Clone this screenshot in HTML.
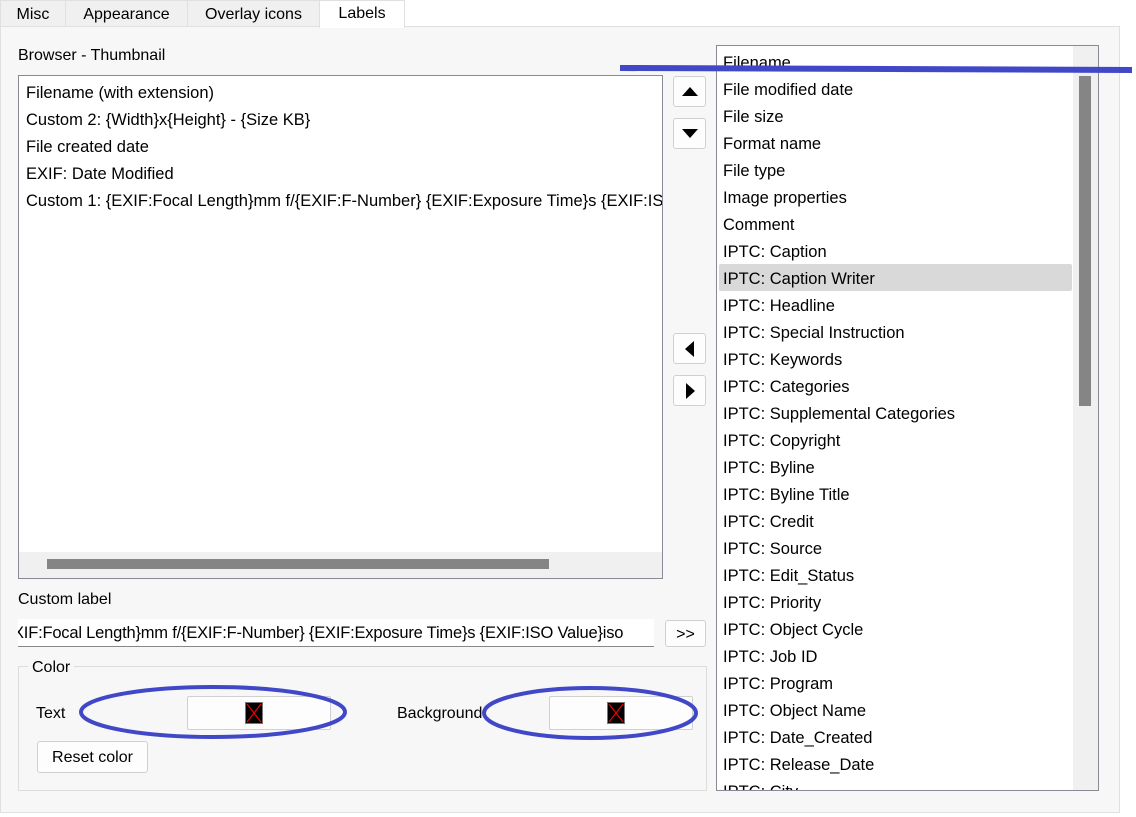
<!DOCTYPE html>
<html><head><meta charset="utf-8"><style>
*{box-sizing:border-box;margin:0;padding:0}
body{width:1136px;height:817px;background:#fff;position:relative;overflow:hidden;font-family:"Liberation Sans",sans-serif;font-size:16.5px;color:#000}
.a{position:absolute}
.tab{position:absolute;top:0;height:27px;background:#f0f0f0;border:1px solid #e0e0e0;border-bottom:none;line-height:28px;text-align:center;font-size:16px}
.panel{left:0;top:26px;width:1120px;height:787px;background:#f7f7f7;border:1px solid #e0e0e0}
.box{background:#fff;border:1px solid #8a8a94}
.btn{position:absolute;background:#fdfdfd;border:1px solid #d0d0d0;border-radius:3px}
.row{position:absolute;left:8px;height:27px;line-height:27px;white-space:nowrap}
</style></head><body>
<div class="tab" style="left:0;width:66px">Misc</div>
<div class="tab" style="left:65px;width:123px">Appearance</div>
<div class="tab" style="left:187px;width:133px">Overlay icons</div>
<div class="tab" style="left:319px;width:86px;background:#fff;height:28px;z-index:2;line-height:26px">Labels</div>
<div class="a panel"></div>

<div class="a" style="left:18px;top:47px;font-size:16px">Browser - Thumbnail</div>
<div class="a box" style="left:18px;top:75px;width:645px;height:504px;overflow:hidden">
 <div class="a" style="left:7px;top:4px;line-height:27px;white-space:nowrap">Filename (with extension)<br>Custom 2: {Width}x{Height} - {Size KB}<br>File created date<br>EXIF: Date Modified<br>Custom 1: {EXIF:Focal Length}mm f/{EXIF:F-Number} {EXIF:Exposure Time}s {EXIF:ISO Value}iso</div>
 <div class="a" style="left:0;top:476px;width:643px;height:26px;background:#f0f0f0"></div>
 <div class="a" style="left:28px;top:483px;width:502px;height:10px;background:#858585"></div>
</div>

<div class="btn" style="left:673px;top:76px;width:33px;height:31px"><svg class="a" style="left:8px;top:10px" width="16" height="9"><path d="M0 9L8 0L16 9Z"/></svg></div>
<div class="btn" style="left:673px;top:118px;width:33px;height:31px"><svg class="a" style="left:8px;top:10px" width="16" height="9"><path d="M0 0L8 9L16 0Z"/></svg></div>
<div class="btn" style="left:673px;top:333px;width:33px;height:31px"><svg class="a" style="left:11px;top:7px" width="9" height="16"><path d="M9 0L0 8L9 16Z"/></svg></div>
<div class="btn" style="left:673px;top:375px;width:33px;height:31px"><svg class="a" style="left:12px;top:7px" width="9" height="16"><path d="M0 0L9 8L0 16Z"/></svg></div>

<div class="a box" style="left:716px;top:45px;width:383px;height:746px;overflow:hidden">
 <div class="a" style="left:2px;top:218px;width:353px;height:27px;background:#d9d9d9;border-radius:2px"></div>
 <div class="a" style="left:356px;top:0;width:25px;height:744px;background:#f0f0f0"></div>
 <div class="a" style="left:362px;top:30px;width:12px;height:330px;background:#858585"></div>
 <div class="row" style="top:4px;left:6px;line-height:27px">Filename<br>File modified date<br>File size<br>Format name<br>File type<br>Image properties<br>Comment<br>IPTC: Caption<br>IPTC: Caption Writer<br>IPTC: Headline<br>IPTC: Special Instruction<br>IPTC: Keywords<br>IPTC: Categories<br>IPTC: Supplemental Categories<br>IPTC: Copyright<br>IPTC: Byline<br>IPTC: Byline Title<br>IPTC: Credit<br>IPTC: Source<br>IPTC: Edit_Status<br>IPTC: Priority<br>IPTC: Object Cycle<br>IPTC: Job ID<br>IPTC: Program<br>IPTC: Object Name<br>IPTC: Date_Created<br>IPTC: Release_Date<br>IPTC: City</div>
</div>

<div class="a" style="left:18px;top:591px;font-size:16px">Custom label</div>
<div class="a box" style="left:18px;top:619px;width:636px;height:28px;border:none;border-bottom:1px solid #888;overflow:hidden"><div class="a" style="left:-5px;top:5px;white-space:nowrap;font-size:16.5px;letter-spacing:-0.2px">XIF:Focal Length}mm f/{EXIF:F-Number} {EXIF:Exposure Time}s {EXIF:ISO Value}iso</div></div>
<div class="btn" style="left:665px;top:620px;width:41px;height:27px;text-align:center;line-height:27px;font-size:16px">&gt;&gt;</div>

<div class="a" style="left:18px;top:666px;width:689px;height:125px;border:1px solid #dcdcdc"></div>
<div class="a" style="left:28px;top:659px;background:#f7f7f7;padding:0 4px;font-size:16px">Color</div>
<div class="a" style="left:36px;top:705px;font-size:16px">Text</div>
<div class="btn" style="left:187px;top:696px;width:144px;height:34px;border-radius:2px"><div class="a" style="left:57px;top:5px;width:18px;height:22px;background:#000;border:1px solid #777"><svg width="16" height="20"><path d="M1 1L15 19M15 1L1 19" stroke="#e00" stroke-width="1.2"/></svg></div></div>
<div class="a" style="left:397px;top:705px;font-size:16px">Background</div>
<div class="btn" style="left:549px;top:696px;width:144px;height:34px;border-radius:2px"><div class="a" style="left:57px;top:5px;width:18px;height:22px;background:#000;border:1px solid #777"><svg width="16" height="20"><path d="M1 1L15 19M15 1L1 19" stroke="#e00" stroke-width="1.2"/></svg></div></div>
<div class="btn" style="left:37px;top:741px;width:111px;height:32px;text-align:center;line-height:32px;font-size:16px">Reset color</div>

<svg class="a" style="left:0;top:0" width="1136" height="817">
 <g fill="none" stroke="#4048c8" stroke-width="4">
  <ellipse cx="213" cy="712" rx="132" ry="25"/>
  <ellipse cx="590" cy="713" rx="106" ry="25"/>
 </g>
 <path d="M620 68L1132 70" stroke="#4048c8" stroke-width="6"/>
</svg>
</body></html>
